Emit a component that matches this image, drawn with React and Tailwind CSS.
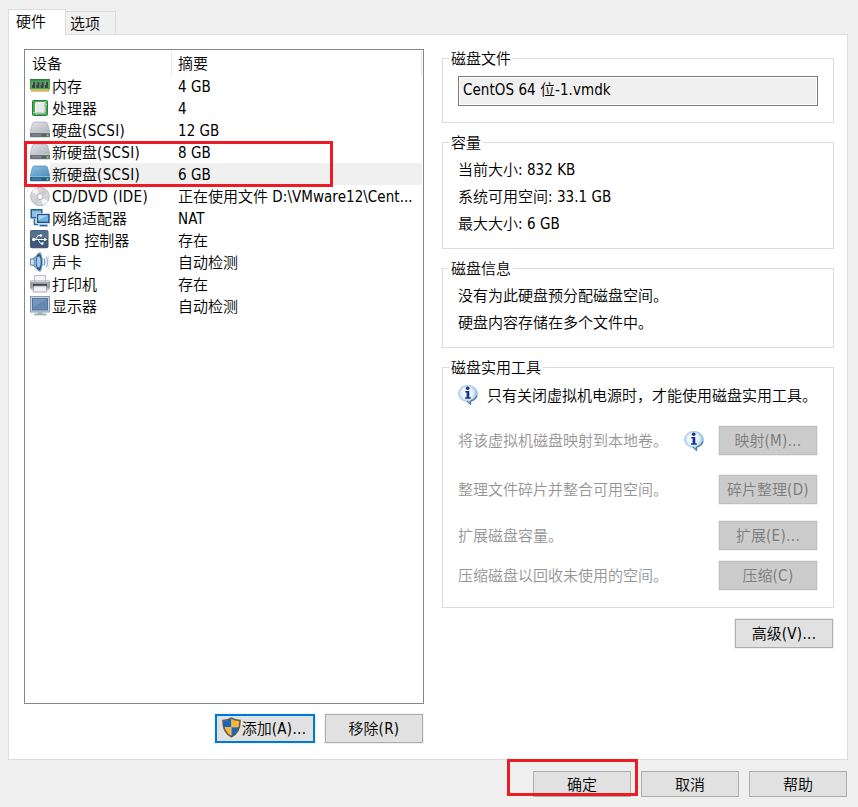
import React from "react";

const HAN = /([\u3000-\u303f\u4e00-\u9fff\uff00-\uffef]+)/;

// Latin runs are set in the narrow UI face, Han runs in the CJK face.
function T({ children }) {
  return children.split(HAN).filter(Boolean).map((run, i) =>
    HAN.test(run) ? (
      <span key={i}>{run}</span>
    ) : (
      <span
        key={i}
        className={`whitespace-pre font-['DejaVu_Sans_Condensed','Noto_Sans',sans-serif] font-normal leading-none ${
          run.includes("(") ? "tracking-[0.35px]" : "tracking-[0.05px]"
        }`}
      >
        {run}
      </span>
    )
  );
}

function Icon({ children }) {
  return (
    <svg width="20" height="22" viewBox="0 0 20 22" className="shrink-0">
      {children}
    </svg>
  );
}

const Memory = () => (
  <Icon>
    <rect x="0" y="4" width="20" height="11" fill="#4aa350" />
    <rect x="0" y="4" width="20" height="1.500" fill="#2c7f37" />
    <path d="M2 7h3v6H2zM6.3 7h3v6h-3zM10.6 7h3v6h-3zM15 7h3v6h-3z" fill="#3b4248" />
    <path d="M2 7h1v3H2zM6.3 7h1v3h-1zM10.6 7h1v3h-1zM15 7h1v3h-1z" fill="#8c9499" />
    <rect x="1" y="14.600" width="18" height="2" fill="#d9a23c" />
    <path d="M0 14.500h20M3 16h14" stroke="#f2d78c" strokeWidth=".6" />
  </Icon>
);

const Cpu = () => (
  <Icon>
    <rect x="2.500" y="3.500" width="15" height="15" rx="1" fill="#48ad55" stroke="#23833a" />
    <path d="M3 15.500h2.200l2 2.500M15 4v2l2 2" stroke="#9bdca0" fill="none" />
    <rect x="5.500" y="5.500" width="9.500" height="10.500" rx="1" fill="#e9e9ea" stroke="#fafafa" />
    <path d="M15 6v10H6" stroke="#a3aaa5" fill="none" />
  </Icon>
);

const Disk = ({ blue }) => (
  <Icon>
    <defs>
      <linearGradient id={blue ? "lidBlue" : "lidGrey"} x1="0" y1="0" x2="1" y2="1">
        <stop offset="0" stopColor={blue ? "#8fbfe2" : "#e6e7ea"} />
        <stop offset="1" stopColor={blue ? "#4c8cc0" : "#adb1b9"} />
      </linearGradient>
    </defs>
    <path d="M4.500 3h11q1.500 0 2 1.500L20 13.500H0L2.500 4.500Q3 3 4.500 3z" fill={`url(#${blue ? "lidBlue" : "lidGrey"})`} stroke={blue ? "#5489b5" : "#a5a8b0"} strokeWidth=".7" />
    <path d="M0 13h20v4q0 1.300-1 1.300H1q-1 0-1-1.300z" fill={blue ? "#2f6590" : "#6b7078"} />
    <path d="M0 13.500h20" stroke={blue ? "#8abce0" : "#c5c8ce"} />
    <path d="M2 16h9" stroke={blue ? "#5f93bd" : "#8f949b"} />
    <path d="M13 15v2.500M15 15v2.500" stroke={blue ? "#1f4f7c" : "#444b55"} />
    <rect x="16.500" y="15.500" width="2" height="1.600" fill="#75d943" />
  </Icon>
);

const Disc = () => (
  <Icon>
    <circle cx="10" cy="11.500" r="9.300" fill="#d5d6d9" stroke="#aaaeb4" strokeWidth=".8" />
    <path d="M10 11.500L2 7A9 9 0 0 1 7 3zM10 11.500l8 4.500a9 9 0 0 1-5 4z" fill="#f5f5f7" />
    <path d="M10 11.500L13 3a9 9 0 0 1 5 4zM10 11.500L7 20a9 9 0 0 1-5-4z" fill="#c9ccd1" />
    <circle cx="10" cy="11.500" r="3.200" fill="#e8e9eb" stroke="#9fa4aa" strokeWidth=".7" />
    <circle cx="10" cy="11.500" r="1.400" fill="#fff" />
  </Icon>
);

const Network = () => (
  <Icon>
    <path d="M0.500 2h12v9.500h-12z" fill="#235f99" />
    <path d="M2 3.500h9v6.500H2z" fill="#8dbfe6" />
    <path d="M4.500 12v5.500h4" stroke="#2f6ba2" fill="none" strokeWidth="1.600" />
    <rect x="6.500" y="6.500" width="13.500" height="10" fill="#1d5288" stroke="#fff" strokeWidth=".6" />
    <path d="M8.300 8.300h9.900v6.400H8.300z" fill="#70b2e4" />
    <path d="M8.300 8.300h9.900l-9.900 5z" fill="#a9d3f1" />
    <path d="M9.500 18.500h8" stroke="#2a5c8d" strokeWidth="1.800" />
  </Icon>
);

const Usb = () => (
  <Icon>
    <rect x="0" y="1" width="18.500" height="18.300" rx="2" fill="#40597a" />
    <rect x=".5" y="1.500" width="17.500" height="8" rx="1.500" fill="#54708f" />
    <path d="M3 10.500h12M5.500 10.500l2.500-4h2.500M8 10.500l2.500 4h2" stroke="#fff" strokeWidth="1" fill="none" />
    <circle cx="3.700" cy="10.500" r="1.700" fill="#fff" />
    <circle cx="11" cy="6.500" r="1.200" fill="#fff" />
    <rect x="11.200" y="13.300" width="2.300" height="2.300" fill="#fff" />
    <path d="M14 8.500l3.200 2-3.200 2z" fill="#fff" />
  </Icon>
);

const Sound = () => (
  <Icon>
    <path d="M.5 8q-.7 3 0 6l3 .5 5.500 5.500q2 .8 2-1V3q0-1.800-2-1L3.500 7.500z" fill="#7ba4ca" stroke="#426f9d" strokeWidth=".8" />
    <path d="M1 8.500h2.500v5H1z" fill="#dbe8f3" />
    <ellipse cx="9" cy="11" rx="3.600" ry="9" fill="#2c5b8e" stroke="#9fc0dd" strokeWidth=".8" />
    <ellipse cx="8.700" cy="11" rx="2" ry="5.400" fill="#a3caea" />
    <path d="M14 7.500q1.800 3.500 0 7" stroke="#6799c7" strokeWidth="1.300" fill="none" />
    <path d="M16.300 5.500q2.600 5.500 0 11" stroke="#8fb5d8" strokeWidth="1.100" fill="none" />
    <path d="M18.200 4q2.300 7 0 14" stroke="#c9dcec" strokeWidth=".8" fill="none" />
  </Icon>
);

const Printer = () => (
  <Icon>
    <path d="M4.500 2.500h11V9h-11z" fill="#f4f4f7" stroke="#a8a9b2" strokeWidth=".8" />
    <rect x="0" y="7.500" width="20" height="8.500" rx="1.300" fill="#9c9ea8" />
    <path d="M1 8.500h18" stroke="#cdced5" strokeWidth="1.500" />
    <rect x="3" y="11" width="14" height="2" fill="#3f414b" />
    <path d="M0 15h20l-1.500 2h-17z" fill="#b9bac2" />
    <path d="M4 13h12l1 6H3z" fill="#eeeef4" stroke="#9b9ca7" strokeWidth=".8" />
    <rect x="17" y="10.500" width="1.800" height="1.500" fill="#75d943" />
  </Icon>
);

const Display = () => (
  <Icon>
    <rect x=".5" y="1.500" width="19" height="15.500" fill="#c9d2dd" stroke="#8b9cb2" />
    <rect x="2.500" y="3.500" width="15" height="11.500" fill="#6488b2" stroke="#55769f" />
    <path d="M3 4h14L3 12z" fill="#7796bd" />
    <path d="M7.500 17.500h5v1.500h-5z" fill="#97a5b6" />
    <path d="M4 19.500h12.500" stroke="#a3afbd" strokeWidth="1.800" />
  </Icon>
);

const InfoIcon = () => (
  <svg width="20" height="20" viewBox="0 0 20 20" className="shrink-0">
    <defs>
      <radialGradient id="bubble" cx=".45" cy=".4" r=".6">
        <stop offset="0" stopColor="#fff" />
        <stop offset=".5" stopColor="#e6f2fb" />
        <stop offset="1" stopColor="#7fb2dd" />
      </radialGradient>
    </defs>
    <path d="M10 .5c5.300 0 9.400 3.400 9.400 8 0 4-2.900 6.800-6.600 7.600L12.500 19.600 8.700 16.300C3.900 15.900.6 12.700.6 8.500.6 3.900 4.700.5 10 .5z" fill="url(#bubble)" stroke="#9ec0dc" strokeWidth=".8" />
    <path d="M19 10.500c-1 3-3.200 4.800-6.200 5.400l-.3 3.300-3.500-3.300" stroke="#4a79a6" strokeWidth="1.200" fill="none" />
    <circle cx="9.700" cy="3.200" r="1.800" fill="#16328f" />
    <path d="M7.300 6h4v6.200h1.500v1.500H7.100v-1.500h1.500V7.500H7.300z" fill="#16328f" />
  </svg>
);

const Shield = () => (
  <svg width="19" height="21" viewBox="0 0 19 21" className="-ml-0.5 mb-0.5 mr-px shrink-0">
    <defs>
      <clipPath id="shield">
        <path d="M9.500 1.500C7 3.200 4 3.700 1.200 3.800 1 11 3 16.500 9.500 19.500 16 16.500 18 11 17.800 3.800 15 3.700 12 3.200 9.500 1.500z" />
      </clipPath>
    </defs>
    <g clipPath="url(#shield)">
      <path d="M0 0h9.500v10.300H0z" fill="#1767bd" />
      <path d="M9.500 0H19v10.300H9.500z" fill="#fdb72a" />
      <path d="M0 10.300h9.500V21H0z" fill="#fdb72a" />
      <path d="M9.500 10.300H19V21H9.500z" fill="#1767bd" />
    </g>
    <path d="M9.500 1.200C7 2.900 4 3.400 1 3.500.8 11 2.800 16.700 9.500 19.800 16.200 16.700 18.200 11 18 3.500 15 3.400 12 2.900 9.500 1.200z" fill="none" stroke="#5b5b57" strokeWidth="1.500" />
  </svg>
);

const devices = [
  [Memory, "内存", "4 GB"],
  [Cpu, "处理器", "4"],
  [Disk, "硬盘(SCSI)", "12 GB"],
  [Disk, "新硬盘(SCSI)", "8 GB"],
  [Disk, "新硬盘(SCSI)", "6 GB", true],
  [Disc, "CD/DVD (IDE)", "正在使用文件 D:\\VMware12\\Cent..."],
  [Network, "网络适配器", "NAT"],
  [Usb, "USB 控制器", "存在"],
  [Sound, "声卡", "自动检测"],
  [Printer, "打印机", "存在"],
  [Display, "显示器", "自动检测"],
];

function Button({ children, disabled, primary, short, icon }) {
  const tone = primary
    ? "w-[100px] border-2 border-[#0078d7] bg-[#e1e1e1]"
    : disabled
    ? "w-[98px] border border-[#bfbfbf] bg-[#cccccc] text-[#7c7c7c]"
    : "w-[98px] border border-[#adadad] bg-[#e1e1e1]";
  return (
    <button
      disabled={disabled}
      className={`${tone} ${short ? "h-[26px]" : "h-[29px]"} flex shrink-0 items-center justify-center whitespace-nowrap ring-1 ring-[#f0f0f0]`}
    >
      {icon}
      <span className={short ? "" : "pb-0.5"}><T>{children}</T></span>
    </button>
  );
}

function Group({ title, className, children }) {
  return (
    <section className={`${className} w-[392px] border border-[#dcdcdc] px-[15px]`}>
      <h2 className="-mt-[12px] -ml-[9px] h-[22px] w-fit bg-white px-0.5 leading-[22px]">{title}</h2>
      {children}
    </section>
  );
}

function Tool({ text, button, info, className }) {
  return (
    <div className={`${className} flex h-[29px] items-center pr-px`}>
      <span className="flex-1 pb-0.5 text-[#959595]">{text}</span>
      {info && <span className="mr-[15px]"><InfoIcon /></span>}
      <Button disabled>{button}</Button>
    </div>
  );
}

export default function App() {
  return (
    <div className="relative flex h-[807px] w-[858px] flex-col overflow-hidden bg-[#f0f0f0] pl-2 font-['Noto_Sans_CJK_SC',sans-serif] text-[15px] font-[350] leading-[22px] text-black">
      <nav className="flex h-[34px] items-end">
        <div className="z-10 -mb-px h-[26px] w-[58px] border border-b-0 border-[#dcdcdc] bg-white pl-[7px] leading-[22px]">硬件</div>
        <div className="-ml-px h-[23px] w-[51px] border border-b-0 border-[#dcdcdc] pl-[4px] leading-[21px]">选项</div>
      </nav>

      <main className="flex h-[726px] w-[840px] border border-[#dcdcdc] bg-white pl-[15px]">
        <div className="mt-[14px] w-[400px]">
          <div className="h-[655px] border border-[#828790] px-px pt-px">
            <div className="flex h-6">
              <div className="w-[146px] border-r border-[#e5e5e5] pl-[6px] leading-[23px]">设备</div>
              <div className="flex-1 border-r border-[#e5e5e5] pl-1.5 leading-[23px]">摘要</div>
            </div>
            {devices.map(([Glyph, name, summary, selected], i) => (
              <div key={i} className="flex h-[22px] pl-1">
                <Glyph blue={selected} />
                <div className={`flex flex-1 whitespace-nowrap ${selected ? "bg-[#f0f0f0]" : ""}`}>
                  <span className="w-[128px] pl-0.5"><T>{name}</T></span>
                  <span><T>{summary}</T></span>
                </div>
              </div>
            ))}
          </div>
          <div className="mt-[10px] flex justify-end gap-[10px] pr-px">
            <Button primary icon={<Shield />}>添加(A)...</Button>
            <Button>移除(R)</Button>
          </div>
        </div>

        <div className="ml-[18px] mt-[23px] flex w-[392px] flex-col">
          <Group title="磁盘文件" className="h-[65px]">
            <div className="mt-[7px] h-[30px] w-[360px] border border-[#7a7a7a] p-px">
              <div className="h-full bg-[#f0f0f0] pl-[3px]"><T>CentOS 64 位-1.vmdk</T></div>
            </div>
          </Group>
          <Group title="容量" className="mt-[19px] h-[107px]">
            <div className="mt-[2px] leading-[27px]">
              <p className="h-[27px]"><T>当前大小: 832 KB</T></p>
              <p className="h-[27px]"><T>系统可用空间: 33.1 GB</T></p>
              <p className="h-[27px]"><T>最大大小: 6 GB</T></p>
            </div>
          </Group>
          <Group title="磁盘信息" className="mt-[19px] h-[80px]">
            <div className="mt-[2px] leading-[27px]">
              <p>没有为此硬盘预分配磁盘空间。</p>
              <p>硬盘内容存储在多个文件中。</p>
            </div>
          </Group>
          <Group title="磁盘实用工具" className="mt-[19px] h-[241px]">
            <div className="mt-[7px] flex h-5 items-center gap-[9px] whitespace-nowrap">
              <InfoIcon />
              <span className="pb-px">只有关闭虚拟机电源时，才能使用磁盘实用工具。</span>
            </div>
            <Tool text="将该虚拟机磁盘映射到本地卷。" button="映射(M)..." info className="mt-[21px]" />
            <Tool text="整理文件碎片并整合可用空间。" button="碎片整理(D)" className="mt-5" />
            <Tool text="扩展磁盘容量。" button="扩展(E)..." className="mt-[17px]" />
            <Tool text="压缩磁盘以回收未使用的空间。" button="压缩(C)" className="mt-[11px]" />
          </Group>
          <div className="mt-[11px] flex justify-end pr-px">
            <Button>高级(V)...</Button>
          </div>
        </div>
      </main>

      <footer className="mt-[11px] flex justify-end gap-[10px] pr-[11px]">
        <Button short>确定</Button>
        <Button short>取消</Button>
        <Button short>帮助</Button>
      </footer>

      {/* Highlight marks drawn over the dialog */}
      <div className="absolute left-6 top-[141px] h-[46px] w-[309px] border-3 border-[#ed1c24]" />
      <div className="absolute left-[507px] top-[759px] h-[37px] w-[131px] border-3 border-[#ed1c24]" />
    </div>
  );
}
